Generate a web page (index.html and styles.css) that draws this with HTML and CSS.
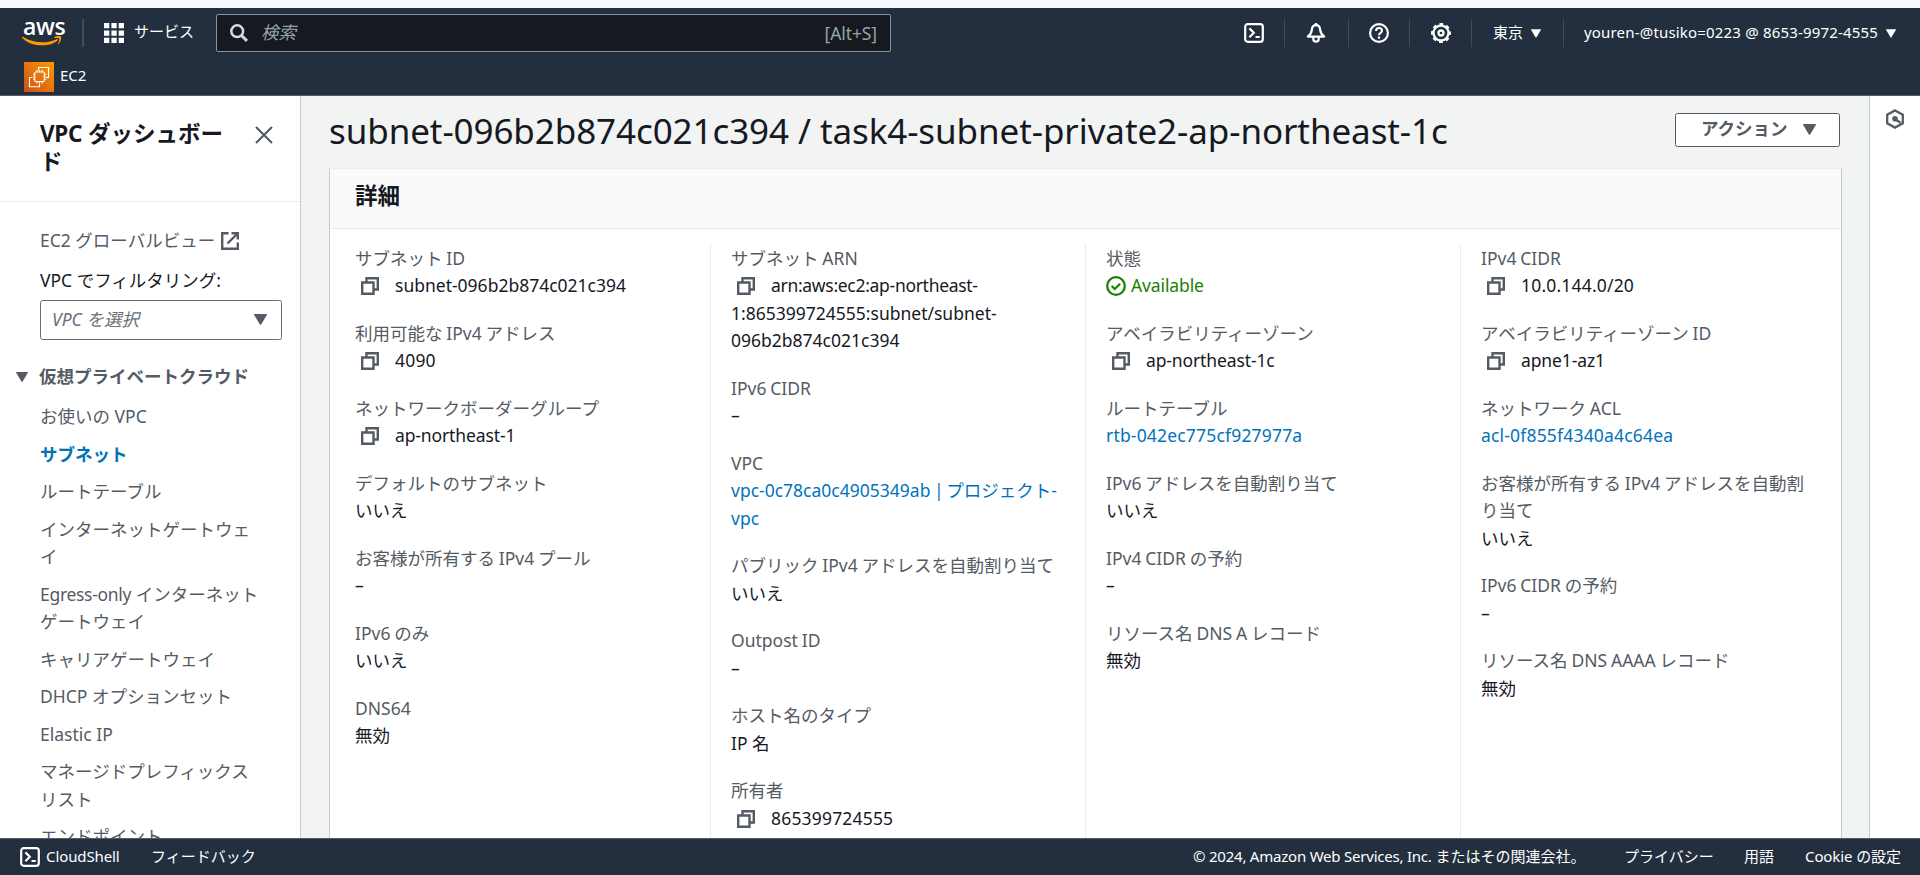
FILE: index.html
```html
<!DOCTYPE html>
<html lang="ja">
<head>
<meta charset="utf-8">
<title>subnet-096b2b874c021c394 | VPC</title>
<link rel="stylesheet" href="styles.css">
</head>
<body>
<svg class="defs" width="0" height="0">
  <symbol id="copy" viewBox="0 0 18 18"><path d="M5.5 5V1.2h11.3v11.3H13" fill="none" stroke="currentColor" stroke-width="2.4"/><path d="M1.2 5.5h11.3v11.3H1.2z" fill="none" stroke="currentColor" stroke-width="2.4"/></symbol>
  <symbol id="caret" viewBox="0 0 12 10"><path d="M0 .5Q0 0 .6 0h10.8q.6 0 .6.6L6.6 9.6q-.6.7-1.2 0z" fill="currentColor"/></symbol>
  <symbol id="shell" viewBox="0 0 20 20"><rect x="1.2" y="1.2" width="17.6" height="17.6" rx="2.5" fill="none" stroke="currentColor" stroke-width="2.2"/><path d="M5.4 5.4 9.8 9.8l-4.4 4.4M11.500 14h4.200" fill="none" stroke="currentColor" stroke-width="2.2"/></symbol>
</svg>
<header class="top">
  <div class="top-main">
    <div class="logo"><span class="logo-text">aws</span>
      <svg class="smile" width="40" height="11" viewBox="0 0 40 11"><path d="M0 1.2Q.3.2 1.3.9C12 7.6 25 7.8 34.6 3.2c1-.4 1.7.5.9 1.2C28 11.300 10 11.300.5 2.200Q0 1.700 0 1.200z" fill="#f90"/><path d="M32.200 1.200C34 0 38-.4 38.900.5c.9 1-.1 5.500-2.200 7.400-.4.4-.8.200-.6-.300.7-1.800 1.600-4.300 1.100-5.100-.6-.7-3.100-.6-4.600-.400-.6.100-.8-.500-.4-.900z" fill="#f90"/></svg>
    </div>
    <i class="bar bar-logo"></i>
    <svg class="grid-icon" width="20" height="20" viewBox="0 0 20 20" fill="#fff"><path d="M0 0h5.300v5.300H0zM7.400 0h5.300v5.300H7.400zM14.700 0H20v5.300h-5.300zM0 7.400h5.300v5.300H0zM7.400 7.400h5.300v5.300H7.400zM14.700 7.400H20v5.300h-5.300zM0 14.700h5.300V20H0zM7.400 14.700h5.300V20H7.400zM14.700 14.700H20V20h-5.300z"/></svg>
    <span class="services">サービス</span>
    <div class="search">
      <svg width="18" height="18" viewBox="0 0 18 18" fill="none" stroke="#d5dbdb" stroke-width="2.500"><circle cx="7.200" cy="7.200" r="5.900"/><path d="m11.500 11.500 5.500 5.300" stroke-width="3"/></svg>
      <em>検索</em><span class="hint">[Alt+S]</span>
    </div>
    <nav class="tools">
      <span class="tool t-shell"><svg width="20" height="20"><use href="#shell"/></svg></span>
      <span class="tool t-bell"><svg width="20" height="20" viewBox="0 0 20 20" fill="none" stroke="#fff" stroke-width="2.200"><path d="M10 2.200C7.200 2.200 6 4.400 5.800 6.800 5.500 10.200 4.600 11.500 1.800 13.600h16.400c-2.800-2.100-3.700-3.400-4-6.800C14 4.400 12.800 2.200 10 2.200z" stroke-linejoin="round"/><path d="M10 0v3M7.300 14v2a2.700 2.700 0 0 0 5.400 0v-2"/></svg></span>
      <span class="tool t-help"><svg width="20" height="20" viewBox="0 0 20 20" fill="none" stroke="#fff" stroke-width="2.200"><circle cx="10" cy="10" r="8.900"/><path d="M7 8C7 6.200 8.300 5.100 10 5.100s3 1 3 2.700c0 2-3 2.100-3 4.400" stroke-width="2"/><path d="M10 13.500v2.200"/></svg></span>
      <span class="tool t-gear"><svg width="20" height="20" viewBox="0 0 20 20" fill="none" stroke="#fff" stroke-width="2.300"><circle cx="10" cy="10" r="7.500"/><circle cx="10" cy="10" r="9" stroke-width="2" stroke-dasharray="3.800 3.269" stroke-dashoffset="1.900"/><circle cx="10" cy="10" r="2.500"/></svg></span>
      <span class="region">東京<svg width="10" height="9"><use href="#caret"/></svg></span>
      <span class="account"><span class="account-name">youren-@tusiko=0223 @ 8653-9972-4555</span><svg width="10" height="9"><use href="#caret"/></svg></span>
    </nav>
  </div>
  <div class="favorites">
    <svg width="30" height="30" viewBox="0 0 30 30"><defs><linearGradient id="ec2" x1="0" y1="1" x2="1" y2="0"><stop stop-color="#c8511b"/><stop offset="1" stop-color="#f90"/></linearGradient></defs><path fill="url(#ec2)" d="M0 0h30v30H0z"/><g fill="none" stroke="#fff" stroke-width="1.100"><path d="M14.500 8V5.500h10v10H22M8.500 15.500h-3v9.200h10V22"/><rect x="10.800" y="10" width="9.500" height="9.500" rx="1"/><path d="M13 8v2M15.500 8v2M18 8v2M13 19.500v2M15.500 19.500v2M18 19.500v2M9 12.200h2M9 14.700h2M9 17.200h2M20.300 12.200h2M20.300 14.700h2M20.300 17.200h2"/></g></svg>
    <span>EC2</span>
  </div>
</header>
<div class="body">
  <aside class="side">
    <div class="side-head"><h2><span class="lat">VPC</span> ダッシュボー<br>ド</h2>
      <svg width="18" height="18" viewBox="0 0 18 18" stroke="#545b64" stroke-width="2.200"><path d="m1 1 16 16M17 1 1 17"/></svg></div>
    <div class="side-body">
      <div class="global"><span>EC2 グローバルビュー</span><svg width="18" height="18" viewBox="0 0 18 18" fill="none" stroke="#545b64" stroke-width="2.400"><path d="M7.500 1.200H1.200v15.600h15.600v-6.300M10.500 1.200h6.300v6.300M16.500 1.500 6.500 11.500"/></svg></div>
      <div class="filter-label">VPC でフィルタリング:</div>
      <div class="select"><em>VPC を選択</em><svg width="13" height="11" viewBox="0 0 12 10"><use href="#caret"/></svg></div>
      <div class="section"><svg width="12" height="10"><use href="#caret"/></svg><span>仮想プライベートクラウド</span></div>
      <ul class="menu">
        <li>お使いの VPC</li>
        <li class="active">サブネット</li>
        <li>ルートテーブル</li>
        <li>インターネットゲートウェ<br>イ</li>
        <li><span class="lat">Egress-only</span> インターネット<br>ゲートウェイ</li>
        <li>キャリアゲートウェイ</li>
        <li>DHCP オプションセット</li>
        <li>Elastic IP</li>
        <li>マネージドプレフィックス<br>リスト</li>
        <li>エンドポイント</li>
      </ul>
    </div>
  </aside>
  <main class="main">
    <div class="title-row"><h1>subnet-096b2b874c021c394 / task4-subnet-private2-ap-northeast-1c</h1>
      <button class="action">アクション<svg width="13" height="11" viewBox="0 0 12 10"><use href="#caret"/></svg></button></div>
    <section class="card">
      <h3>詳細</h3>
      <div class="cols">
        <dl>
          <div><dt>サブネット ID</dt><dd><svg class="copy"><use href="#copy"/></svg>subnet-096b2b874c021c394</dd></div>
          <div><dt>利用可能な IPv4 アドレス</dt><dd><svg class="copy"><use href="#copy"/></svg><span class="num">4090</span></dd></div>
          <div><dt>ネットワークボーダーグループ</dt><dd><svg class="copy"><use href="#copy"/></svg><span class="az">ap-northeast-1</span></dd></div>
          <div><dt>デフォルトのサブネット</dt><dd>いいえ</dd></div>
          <div><dt>お客様が所有する IPv4 プール</dt><dd>–</dd></div>
          <div><dt>IPv6 のみ</dt><dd>いいえ</dd></div>
          <div><dt>DNS64</dt><dd>無効</dd></div>
        </dl>
        <dl>
          <div><dt>サブネット ARN</dt><dd><svg class="copy"><use href="#copy"/></svg><span class="lat">arn:aws:ec2:ap-northeast-</span><br>1:865399724555:subnet/subnet-<br>096b2b874c021c394</dd></div>
          <div><dt>IPv6 CIDR</dt><dd>–</dd></div>
          <div><dt>VPC</dt><dd class="link">vpc-0c78ca0c4905349ab<span class="sep"> | </span>プロジェクト-<br>vpc</dd></div>
          <div><dt>パブリック IPv4 アドレスを自動割り当て</dt><dd>いいえ</dd></div>
          <div><dt>Outpost ID</dt><dd>–</dd></div>
          <div><dt>ホスト名のタイプ</dt><dd>IP 名</dd></div>
          <div><dt>所有者</dt><dd><svg class="copy"><use href="#copy"/></svg><span class="num">865399724555</span></dd></div>
        </dl>
        <dl>
          <div><dt>状態</dt><dd class="ok"><svg width="20" height="20" viewBox="0 0 20 20" fill="none" stroke="#1d8102" stroke-width="2.300"><circle cx="10" cy="10" r="8.800"/><path d="m5.700 10 3.100 3 5.300-5.300"/></svg><span class="az">Available</span></dd></div>
          <div><dt>アベイラビリティーゾーン</dt><dd><svg class="copy"><use href="#copy"/></svg><span class="az">ap-northeast-1c</span></dd></div>
          <div><dt>ルートテーブル</dt><dd class="link num">rtb-042ec775cf927977a</dd></div>
          <div><dt>IPv6 アドレスを自動割り当て</dt><dd>いいえ</dd></div>
          <div><dt>IPv4 CIDR の予約</dt><dd>–</dd></div>
          <div><dt>リソース名 DNS A レコード</dt><dd>無効</dd></div>
        </dl>
        <dl>
          <div><dt>IPv4 CIDR</dt><dd><svg class="copy"><use href="#copy"/></svg><span class="num">10.0.144.0/20</span></dd></div>
          <div><dt>アベイラビリティーゾーン ID</dt><dd><svg class="copy"><use href="#copy"/></svg><span class="az">apne1-az1</span></dd></div>
          <div><dt>ネットワーク ACL</dt><dd class="link num">acl-0f855f4340a4c64ea</dd></div>
          <div><dt>お客様が所有する IPv4 アドレスを自動割<br>り当て</dt><dd>いいえ</dd></div>
          <div><dt>IPv6 CIDR の予約</dt><dd>–</dd></div>
          <div><dt>リソース名 DNS AAAA レコード</dt><dd>無効</dd></div>
        </dl>
      </div>
    </section>
  </main>
  <aside class="rail"><svg width="18" height="20" viewBox="0 0 18 20" fill="none" stroke="#545b64" stroke-width="2.300"><path d="M9 1.400 16.800 5.700v8.600L9 18.600 1.200 14.300V5.700z"/><circle cx="9" cy="9.700" r="2.800" fill="#545b64" stroke="none"/><path d="m9 10 5.500 3.800"/></svg></aside>
</div>
<footer class="foot">
  <svg width="20" height="20"><use href="#shell"/></svg><span class="f-shell">CloudShell</span><span>フィードバック</span>
  <span class="f-copy"><span class="f-lat">© 2024, Amazon Web Services, Inc.</span> またはその関連会社。</span><span class="f-priv">プライバシー</span><span class="f-terms">用語</span><span class="f-cookie">Cookie の設定</span>
</footer>
</body>
</html>
```
FILE: styles.css
```css
* { box-sizing: border-box; }
body {
  margin: 0;
  height: 875px;
  overflow: hidden;
  display: flex;
  flex-direction: column;
  background: #fff;
  color: #16191f;
  font: 17.5px/27.5px "Noto Sans", "Noto Sans CJK JP", sans-serif;
}
svg { flex: none; display: block; }
.defs { position: absolute; }
h1, h2, h3, dl, dd, ul { margin: 0; padding: 0; }
span, dt, dd, li, h1, h2 { white-space: nowrap; }
.lat { letter-spacing: -0.3px; }
.az { letter-spacing: -0.12px; }
.num { letter-spacing: 0.18px; }
.sep { letter-spacing: -1px; }

.top {
  flex: none;
  height: 96px;
  border-top: 8px solid #f8f8ff;
  border-bottom: 1px solid #545b64;
  background: #232f3e;
  color: #fff;
  font-size: 15px;
}
.top-main { display: flex; align-items: center; height: 50px; }
.logo { width: 60px; height: 28px; padding-left: 22px; }
.logo-text { display: block; height: 17px; margin-left: 1px; font: 600 23px/15px "Open Sans", sans-serif; letter-spacing: -0.3px; }
.bar { width: 2px; height: 28px; background: #414d5c; }
.bar-logo { margin-left: 22px; }
.grid-icon { margin-left: 20px; }
.services { width: 82px; margin-left: 10px; margin-top: -2px; }
.search {
  display: flex; align-items: center;
  width: 675px; height: 38px;
  padding: 0 13px 0 13px;
  border: 1px solid #879596; border-radius: 2px;
  background: #16191f; color: #95a5a6;
  font-size: 17.5px;
}
.search em { margin-left: 13px; }
.hint { margin-left: auto; padding-top: 1px; font-size: 17.5px; letter-spacing: -0.1px; }
.tools { display: flex; align-items: center; margin-left: auto; height: 28px; }
.tool { display: flex; align-items: center; height: 28px; border-right: 1px solid #414d5c; }
.t-shell { width: 41px; }
.t-bell { width: 64px; padding-left: 21px; }
.t-help { width: 61px; padding-left: 20px; }
.t-gear { width: 62px; padding-left: 21px; }
.region { display: flex; align-items: center; gap: 8px; width: 92px; height: 28px; padding-left: 21px; border-right: 1px solid #414d5c; }
.account { display: flex; align-items: center; width: 356px; padding-left: 20px; letter-spacing: 0.18px; }
.account-name { width: 302px; }
.favorites { display: flex; gap: 6px; padding: 4px 24px; }

.body { flex: 1; min-height: 0; display: flex; overflow: hidden; }
.side { flex: none; width: 301px; border-right: 1px solid #c3cbcb; overflow: hidden; }
.side-head { display: flex; height: 106px; padding: 24px 0 0 40px; border-bottom: 1px solid #eaeded; }
.side-head h2 { width: 215px; font-size: 22.5px; font-weight: 700; line-height: 27.5px; }
.side-head svg { margin-top: 6px; }
.side-body { padding: 25px 18px 0 40px; color: #545b64; }
.global { display: flex; align-items: center; gap: 6px; }
.filter-label { margin-top: 12.5px; color: #16191f; }
.select { display: flex; align-items: center; justify-content: space-between; height: 40px; margin-top: 5px; padding: 0 14px 0 11px; border: 1px solid #687078; border-radius: 2.5px; }
.select em { color: #687078; }
.select svg { color: #545b64; }
.section { display: flex; align-items: center; gap: 11px; margin: 23.5px 0 0 -24px; font-weight: 700; }
.menu { list-style: none; padding-top: 12.5px; }
.menu li { margin-bottom: 10px; }
.menu .active { color: #0073bb; font-weight: 700; }

.main { flex: 1; min-width: 0; padding: 0 27px 0 28px; background: #f2f3f3; }
.title-row { display: flex; align-items: flex-start; justify-content: space-between; height: 72px; padding-right: 2px; }
h1 { font-size: 35px; font-weight: 400; line-height: 45px; margin-top: 12px; letter-spacing: -0.09px; }
.action {
  display: flex; align-items: center; gap: 15px;
  width: 165px; height: 34px; margin-top: 17px; padding: 0 0 2px 25px;
  border: 1px solid #545b64; border-radius: 2.5px; background: #fff;
  color: #545b64; font: inherit; font-weight: 700;
}
.card { height: 680px; border: 1px solid #c3cbcb; border-top-color: #eaeded; background: #fff; }
h3 { height: 60px; padding: 13px 25px; border-bottom: 1px solid #eaeded; background: #fafafa; font-size: 22.5px; line-height: 27.5px; }
.cols { display: grid; grid-template-columns: 380px 375px 375px 1fr; margin-top: 15px; height: 588px; }
.cols dl { padding-top: 0.5px; padding-left: 20px; border-left: 1px solid #eaeded; }
.cols dl:first-child { padding-left: 25px; border-left: 0; }
.cols dl > div { margin-bottom: 20px; }
.cols dt { color: #545b64; word-spacing: -0.7px; }
.copy { display: inline-block; width: 18px; height: 18px; margin: 0 16px 0 6px; vertical-align: -3px; color: #545b64; }
.link { color: #0073bb; }
.ok { display: flex; align-items: center; gap: 5px; color: #1d8102; }

.rail { flex: none; width: 51px; border-left: 1px solid #c3cbcb; padding: 13px 0 0 16px; }

.foot { flex: none; display: flex; align-items: center; height: 37px; padding: 0 19px 0 20px; border-top: 1px solid #545b64; background: #232f3e; color: #fff; font-size: 15px; }
.f-shell { width: 105px; margin-left: 6px; letter-spacing: -0.1px; }
.f-lat { letter-spacing: -0.22px; }
.f-copy { margin-left: auto; width: 431px; }
.f-priv { width: 120px; }
.f-terms { width: 61px; }
.f-cookie { width: 96px; letter-spacing: -0.1px; }
```
